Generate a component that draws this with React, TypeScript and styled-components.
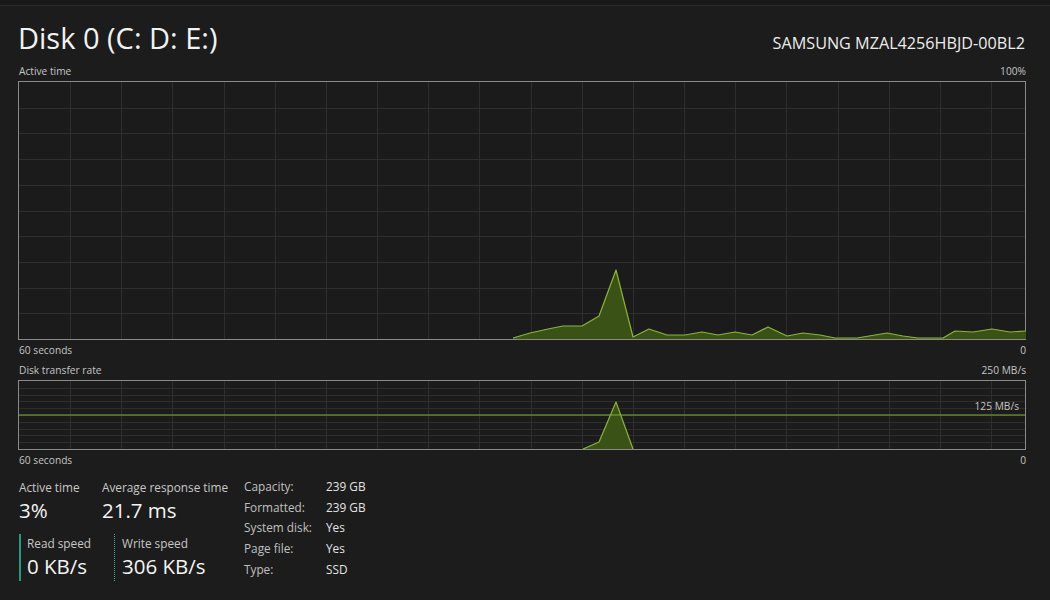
import React from "react";
import styled, { createGlobalStyle } from "styled-components";

const GlobalStyle = createGlobalStyle`
  html, body { margin: 0; padding: 0; background: #1c1c1c; }
  body { font-family: "Open Sans", "Noto Sans", sans-serif; color: #e8e8e8; }
`;

const Page = styled.div`
  width: 1050px;
  height: 600px;
  overflow: hidden;
  background: #1c1c1c;
`;

const TopStrip = styled.div`
  height: 5px;
  background: #191919;
  border-bottom: 1px solid #2c2c2c;
`;

const Content = styled.div`
  padding: 0 24px 0 18px;
`;

const Header = styled.div`
  display: flex;
  justify-content: space-between;
  align-items: baseline;
  height: 36px;
  margin-top: 14px;
`;

const Title = styled.h1`
  margin: 0;
  font-weight: 400;
  font-size: 29px;
  line-height: 36px;
  color: #f2f2f2;
`;

const Model = styled.div`
  font-size: 16.2px;
  color: #ececec;
  margin-right: 1px;
`;

const LabelRow = styled.div<{ $mt?: number }>`
  display: flex;
  justify-content: space-between;
  font-size: 10.2px;
  line-height: 14px;
  height: 14px;
  color: #c4c4c4;
  margin-top: ${(p) => p.$mt ?? 0}px;
  padding-left: 1px;
`;

const GraphBox = styled.div<{ $h: number; $mt?: number }>`
  position: relative;
  box-sizing: border-box;
  height: ${(p) => p.$h}px;
  border: 1px solid #8a8a8a;
  margin-top: ${(p) => p.$mt ?? 0}px;
  background: #1b1b1b;
  svg { display: block; overflow: visible; }
`;

const OverlayLabel = styled.span`
  position: absolute;
  right: 6px;
  top: 18px;
  font-size: 10.2px;
  line-height: 14px;
  color: #c4c4c4;
`;

const Stats = styled.div`
  display: flex;
  margin-top: 11px;
`;

const Perf = styled.div`
  display: flex;
  flex-direction: column;
  gap: 10px;
  width: 226px;
`;

const PerfRow = styled.div`
  display: flex;
`;

const Metric = styled.div<{ $w?: number }>`
  display: flex;
  flex-direction: column;
  padding-left: 1px;
  width: ${(p) => (p.$w ? `${p.$w}px` : "auto")};
  flex: none;
`;

const SpeedMetric = styled.div<{ $dotted?: boolean; $w?: number }>`
  display: flex;
  flex-direction: column;
  box-sizing: border-box;
  width: ${(p) => (p.$w ? `${p.$w}px` : "auto")};
  flex: none;
  padding-left: ${(p) => (p.$dotted ? 7 : 6)}px;
  border-left: ${(p) => (p.$dotted ? "1px dotted #3ab597" : "2px solid #28977a")};
  margin-left: 1px;
  padding-bottom: 1px;
`;

const MetricLabel = styled.span`
  font-size: 11.8px;
  line-height: 18px;
  color: #c8c8c8;
  white-space: nowrap;
`;

const MetricValue = styled.span`
  font-size: 20.5px;
  line-height: 28px;
  color: #f4f4f4;
  white-space: nowrap;
`;

const Info = styled.div`
  display: grid;
  grid-template-columns: 82px auto;
  grid-auto-rows: 20.7px;
  margin-top: -1px;
  font-size: 11.8px;
  line-height: 18px;
`;

const InfoKey = styled.span`
  color: #c0c0c0;
`;

const InfoVal = styled.span`
  color: #e4e4e4;
`;

type Pt = [number, number];

const activePts: Pt[] = [
  [513, 338], [530, 333], [548, 329], [563, 326], [582, 326], [599, 316], [616, 270],
  [633, 337], [649, 329], [667, 335], [685, 335], [702, 332], [718, 335], [735, 332],
  [752, 335], [768, 327], [787, 336], [803, 333], [820, 335], [835, 338], [857, 338],
  [887, 333], [903, 336], [918, 338], [943, 338], [955, 331], [973, 332], [992, 329],
  [1010, 332], [1026, 331],
];

const transferPts: Pt[] = [
  [583, 449], [599, 442], [616, 402], [633, 449],
];

const Grid: React.FC<{ w: number; h: number; rows: number; color: string }> = ({ w, h, rows, color }) => {
  const vx: number[] = [];
  for (let x = 51; x < w; x += 51.17) vx.push(Math.round(x) + 0.5);
  const hy: number[] = [];
  for (let i = 1; i < rows; i++) hy.push(Math.round((h * i) / rows) + 0.5);
  return (
    <g stroke={color} strokeWidth={1}>
      {vx.map((x) => (
        <line key={"v" + x} x1={x} y1={0} x2={x} y2={h} />
      ))}
      {hy.map((y) => (
        <line key={"h" + y} x1={0} y1={y} x2={w} y2={y} />
      ))}
    </g>
  );
};

const Area: React.FC<{ pts: Pt[]; ox: number; oy: number; base: number }> = ({ pts, ox, oy, base }) => {
  const rel = pts.map(([x, y]) => [x - ox, y - oy] as Pt);
  const line = rel.map(([x, y]) => `${x},${y}`).join(" ");
  const first = rel[0];
  const last = rel[rel.length - 1];
  const poly = `${first[0]},${base} ${line} ${last[0]},${base}`;
  return (
    <g>
      <polygon points={poly} fill="#3a5216" />
      <polyline points={line} fill="none" stroke="#8bb33c" strokeWidth={1.2} strokeLinejoin="round" />
    </g>
  );
};

export default function App() {
  return (
    <Page>
      <GlobalStyle />
      <TopStrip />
      <Content>
        <Header>
          <Title>Disk 0 (C: D: E:)</Title>
          <Model>SAMSUNG MZAL4256HBJD-00BL2</Model>
        </Header>
        <LabelRow $mt={8}>
          <span>Active time</span>
          <span>100%</span>
        </LabelRow>
        <GraphBox $h={259} $mt={3}>
          <svg width="1006" height="257" viewBox="0 0 1006 257">
            <Grid w={1006} h={257} rows={10} color="#2e2e2e" />
            <Area pts={activePts} ox={19} oy={82} base={257} />
          </svg>
        </GraphBox>
        <LabelRow $mt={3}>
          <span>60 seconds</span>
          <span>0</span>
        </LabelRow>
        <LabelRow $mt={6}>
          <span>Disk transfer rate</span>
          <span>250 MB/s</span>
        </LabelRow>
        <GraphBox $h={70} $mt={3}>
          <svg width="1006" height="68" viewBox="0 0 1006 68">
            <Grid w={1006} h={68} rows={10} color="#2e2e2e" />
            <Area pts={transferPts} ox={19} oy={381} base={68} />
            <line x1={0} y1={34} x2={1006} y2={34} stroke="#7fae2e" strokeWidth={1.2} />
          </svg>
          <OverlayLabel>125 MB/s</OverlayLabel>
        </GraphBox>
        <LabelRow $mt={3}>
          <span>60 seconds</span>
          <span>0</span>
        </LabelRow>
        <Stats>
          <Perf>
            <PerfRow>
              <Metric $w={82}>
                <MetricLabel>Active time</MetricLabel>
                <MetricValue>3%</MetricValue>
              </Metric>
              <Metric>
                <MetricLabel>Average response time</MetricLabel>
                <MetricValue>21.7 ms</MetricValue>
              </Metric>
            </PerfRow>
            <PerfRow>
              <SpeedMetric $w={94}>
                <MetricLabel>Read speed</MetricLabel>
                <MetricValue>0 KB/s</MetricValue>
              </SpeedMetric>
              <SpeedMetric $dotted>
                <MetricLabel>Write speed</MetricLabel>
                <MetricValue>306 KB/s</MetricValue>
              </SpeedMetric>
            </PerfRow>
          </Perf>
          <Info>
            <InfoKey>Capacity:</InfoKey>
            <InfoVal>239 GB</InfoVal>
            <InfoKey>Formatted:</InfoKey>
            <InfoVal>239 GB</InfoVal>
            <InfoKey>System disk:</InfoKey>
            <InfoVal>Yes</InfoVal>
            <InfoKey>Page file:</InfoKey>
            <InfoVal>Yes</InfoVal>
            <InfoKey>Type:</InfoKey>
            <InfoVal>SSD</InfoVal>
          </Info>
        </Stats>
      </Content>
    </Page>
  );
}
